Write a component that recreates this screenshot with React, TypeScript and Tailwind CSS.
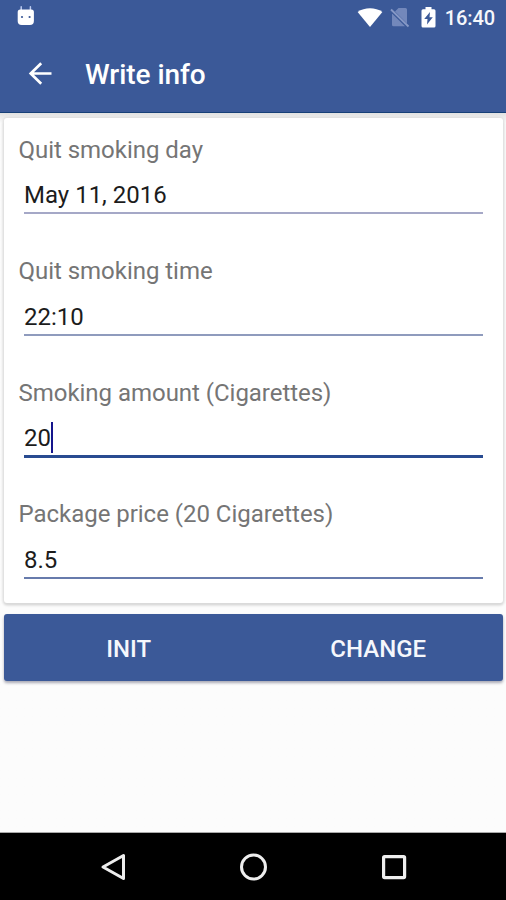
import React from 'react';

type FieldProps = { label: string; value: string; line: string; focused?: boolean };

function Field({ label, value, line, focused }: FieldProps) {
  return (
    <div className="h-[121.5px]">
      <div className="-ml-[0.5px] flex h-8 items-center whitespace-nowrap pt-px text-[24px] tracking-[-0.030px] text-[#757575]">{label}</div>
      <div className="ml-[5px] mr-[7px] mt-[12px] flex h-[35px] items-center text-[#1c1c1c]">
        <span className="whitespace-nowrap pt-px text-[24px]">{value}</span>
        {focused && <span className="h-[31px] w-[2px] bg-[#15158c]" />}
      </div>
      <div className={`ml-[5px] mr-[7px] ${line}`} />
    </div>
  );
}

function StatusBar() {
  return (
    <div className="flex h-[36px] items-center pl-[17px] pr-[11px]">
      <svg width="18" height="20" viewBox="0 0 18 20" className="mb-[4px]">
        <path d="M4.200 0.800V6M13.400 0.800V6" stroke="#bccbf0" strokeWidth="1.500" strokeLinecap="round" />
        <path d="M3.200 3.500h11.200q2.500 0 2.500 2.500V15q0 4-4 4H4.700Q.700 19 .700 15V6Q.700 3.500 3.200 3.500Z" fill="#fff" />
        <circle cx="5" cy="11" r="1.100" fill="#3b5998" />
        <circle cx="12.600" cy="11" r="1.100" fill="#3b5998" />
      </svg>
      <div className="flex-1" />
      <svg width="26" height="20" viewBox="0 0 26 20">
        <path d="M0.600 4C7.500-1 18.500-1 25.400 4L13 19Z" fill="#fff" />
      </svg>
      <svg width="20" height="22" viewBox="0 0 20 22" className="ml-[7px]">
        <path d="M5 4.500L8.500 1H15.500Q17 1 17 2.500V16.500ZM2.500 7L15 19.300H3.500Q2 19.300 2 17.800V7Z" fill="#7388bb" />
        <path d="M1 2.500L18.500 19.500" stroke="#8799c6" strokeWidth="1.800" />
      </svg>
      <svg width="15" height="21" viewBox="0 0 15 21" className="mb-[2px] ml-[11px]">
        <path d="M4.500 0h6v2.200H13q1.500 0 1.500 1.500V19q0 1.500-1.500 1.500H2Q.5 20.500.5 19V3.700Q.5 2.200 2 2.200H4.500Z" fill="#fff" />
        <path d="M9 5L3.200 12H6.500L6 17.500L11.800 10.200H8.500Z" fill="#3b5998" />
      </svg>
      <span className="ml-[9px] whitespace-nowrap text-[20px] font-medium leading-6 tracking-[-0.100px] text-[#f5f7fb]">16:40</span>
    </div>
  );
}

export default function App() {
  return (
    <div className="flex h-[900px] w-[506px] flex-col bg-[#fcfcfc] font-['Roboto',sans-serif]">
      <header className="h-[113px] border-b border-[#174078] bg-[#3b5998]">
        <StatusBar />
        <div className="flex h-[76px] items-center pl-[28px]">
          <svg width="24" height="24" viewBox="0 0 24 24" fill="none" stroke="#fff" strokeWidth="2.700">
            <path d="M23.500 11.500H2.500M13.200 1.200L2.700 11.500L13.200 21.800" />
          </svg>
          <h1 className="ml-[33px] mt-[2px] whitespace-nowrap text-[28px] font-medium leading-8 tracking-[-0.050px] text-white">Write info</h1>
        </div>
      </header>
      <main className="flex-1 bg-linear-to-b from-[#e2e2e2] from-0% to-[#fcfcfc] to-[10px] pl-[4px] pr-[3px] pt-[5px]">
        <section className="h-[485px] rounded-[3px] bg-white pl-[15px] pr-[13px] pt-[15px] shadow-[0_0_3px_1px_#dedede,0_2px_3px_#cccccc]">
          <Field label="Quit smoking day" value="May 11, 2016" line="h-[2px] bg-[#a5a8c7]" />
          <Field label="Quit smoking time" value="22:10" line="h-[2px] bg-[#8f9bbd]" />
          <Field label="Smoking amount (Cigarettes)" value="20" focused line="h-[3px] bg-[#294b91]" />
          <Field label="Package price (20 Cigarettes)" value="8.5" line="h-[2px] bg-[#677bac]" />
        </section>
        <div className="mt-[11px] flex h-[67px] rounded-[3px] bg-[#3b5998] text-[24px] font-medium text-[#f5f7fc] shadow-[0_2px_3px_#a8a8b4]">
          <button className="flex-1 pt-[2px]">INIT</button>
          <button className="flex-1 pt-[2px]">CHANGE</button>
        </div>
      </main>
      <nav className="flex h-[68px] items-center border-t border-[#a9a9a9] bg-black pl-[100px]">
        <svg width="28" height="30" viewBox="0 0 28 30" fill="none" stroke="#eee" strokeWidth="3" strokeLinejoin="round">
          <path d="M3 15L23.500 3.500V26.500Z" />
        </svg>
        <svg width="30" height="30" viewBox="0 0 30 30" className="ml-[111px]" fill="none" stroke="#eee" strokeWidth="3">
          <circle cx="14.500" cy="15" r="12" />
        </svg>
        <svg width="26" height="26" viewBox="0 0 26 26" className="ml-[112px]" fill="none" stroke="#eee" strokeWidth="3.200">
          <rect x="2.600" y="2.600" width="21" height="21" rx="1" />
        </svg>
      </nav>
    </div>
  );
}
